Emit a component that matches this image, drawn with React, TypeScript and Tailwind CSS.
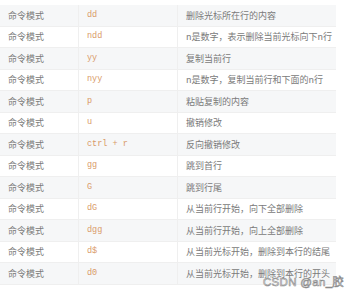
const ROWS: [string, string][] = [
  ['dd', '删除光标所在行的内容'],
  ['ndd', 'n是数字，表示删除当前光标向下n行'],
  ['yy', '复制当前行'],
  ['nyy', 'n是数字，复制当前行和下面的n行'],
  ['p', '粘贴复制的内容'],
  ['u', '撤销修改'],
  ['ctrl + r', '反向撤销修改'],
  ['gg', '跳到首行'],
  ['G', '跳到行尾'],
  ['dG', '从当前行开始，向下全部删除'],
  ['dgg', '从当前行开始，向上全部删除'],
  ['d$', '从当前光标开始，删除到本行的结尾'],
  ['d0', '从当前光标开始，删除到本行的开头'],
];

export default function App() {
  return (
    <div className="relative w-[352px] h-[299px] bg-white overflow-hidden" style={{ fontFamily: '"Noto Sans CJK SC", "Noto Sans", sans-serif' }}>
      <div className="pt-[5px] w-[336px] flex flex-col">
        {ROWS.map(([cmd, desc], i) => (
          <div key={cmd} className={`flex h-[21.5px] items-center border-b border-[#efefef] ${i % 2 === 0 ? 'bg-[#f6f7f8]' : 'bg-white'}`}>
            <div className="w-[79px] h-full flex items-center pl-[8px] text-[9px] text-[#7a7a7a] border-r border-[#efefef]">命令模式</div>
            <div className="w-[99px] h-full flex items-center pl-[8px] text-[8.5px] text-[#d99a68] border-r border-[#efefef]" style={{ fontFamily: '"Liberation Mono", monospace' }}>{cmd}</div>
            <div className="flex-1 h-full flex items-center pl-[8px] text-[9px] text-[#7a7a7a] whitespace-nowrap">{desc}</div>
          </div>
        ))}
      </div>
      <div className="absolute left-[263px] top-[275px] text-[11.5px] leading-[15px] text-white whitespace-nowrap tracking-[0.3px]" style={{ fontFamily: '"Liberation Sans", "Noto Sans CJK SC", sans-serif', WebkitTextStroke: '0.6px #8a8a8a' }}>CSDN @an_胶</div>
    </div>
  );
}
